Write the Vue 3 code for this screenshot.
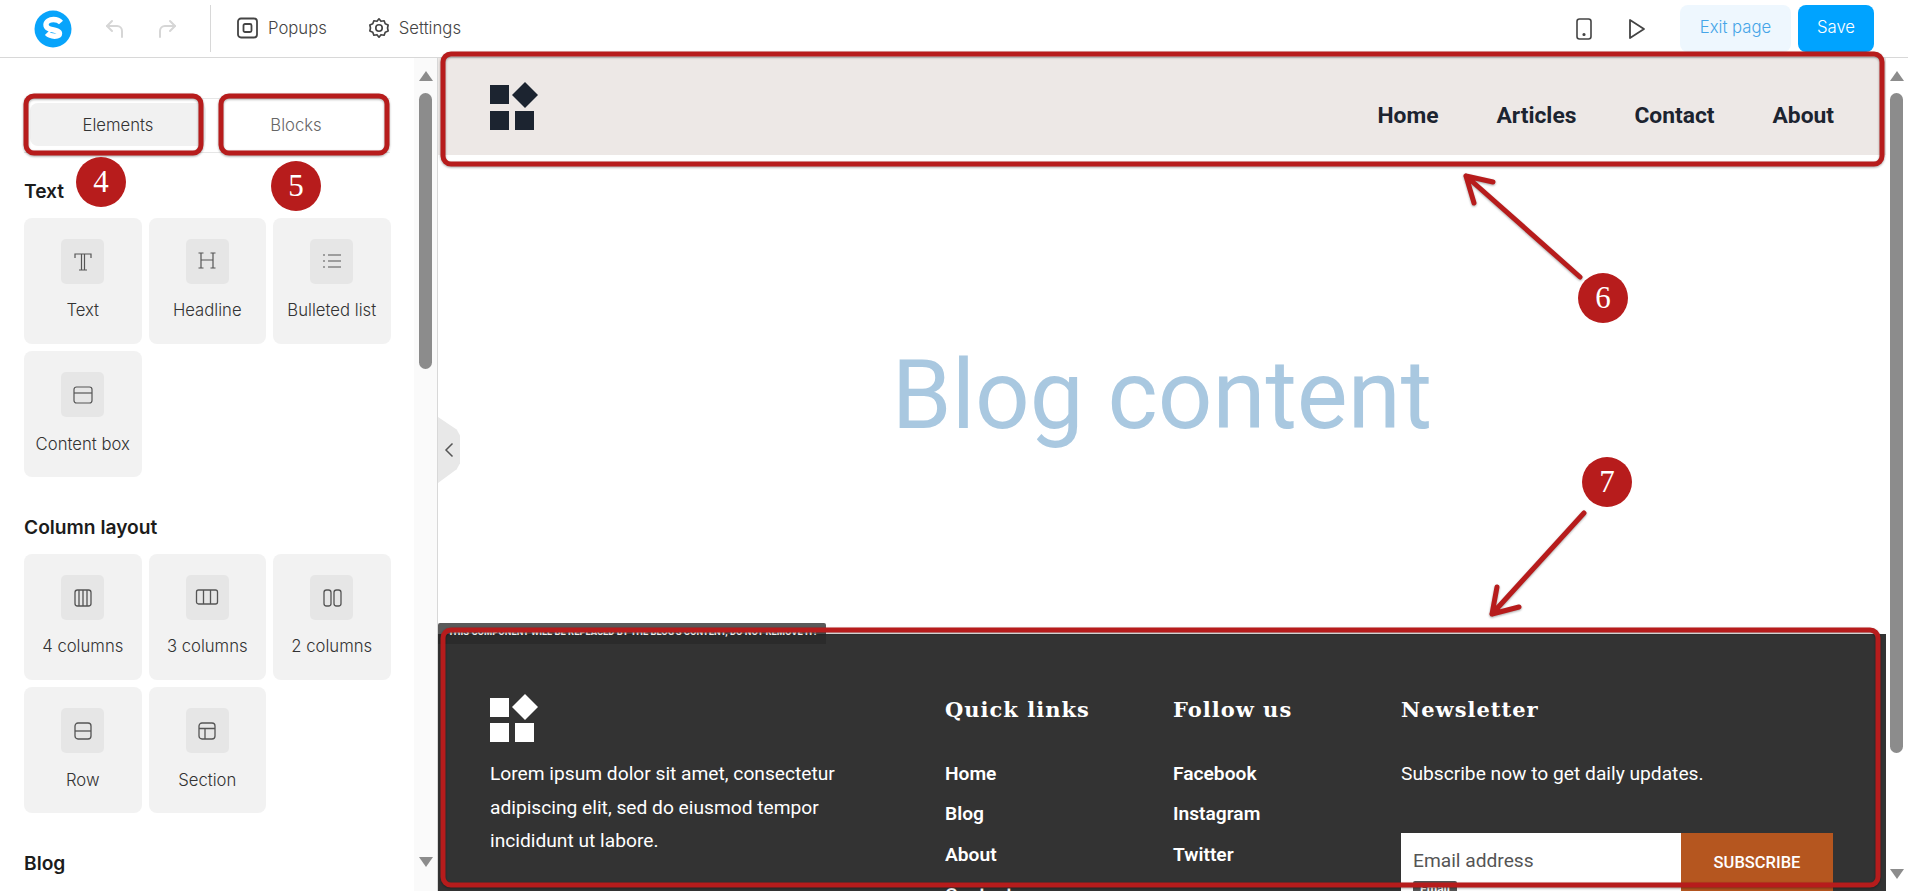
<script setup>
const textTiles = [
  { label: 'Text', icon: 'text' },
  { label: 'Headline', icon: 'headline' },
  { label: 'Bulleted list', icon: 'list' },
  { label: 'Content box', icon: 'box' },
]

const columnTiles = [
  { label: '4 columns', icon: 'col4' },
  { label: '3 columns', icon: 'col3' },
  { label: '2 columns', icon: 'col2' },
  { label: 'Row', icon: 'row' },
  { label: 'Section', icon: 'section' },
]

const navLinks = ['Home', 'Articles', 'Contact', 'About']
const quickLinks = ['Home', 'Blog', 'About', 'Contact']
const followLinks = ['Facebook', 'Instagram', 'Twitter']

const badges = [
  { n: 4, x: 101, y: 182 },
  { n: 5, x: 296, y: 186 },
  { n: 6, x: 1603, y: 298 },
  { n: 7, x: 1607, y: 482 },
]
</script>

<template>
  <div class="page">
    <header class="topbar">
      <div class="brand">
        <svg width="38" height="38" viewBox="0 0 38 38">
          <circle cx="19" cy="19" r="18.5" fill="#08a4fb" />
          <path d="M27 12.500c-2-2.200-4.700-3-7.500-3-4 0-7.500 2-7.500 5.200 0 6.800 13.500 3.800 13.500 8.900 0 1.700-2 2.600-5 2.600-3 0-5.700-1-7.700-3" fill="none" stroke="#fff" stroke-width="5.400" />
        </svg>
      </div>
      <div class="history">
        <svg width="24" height="24" viewBox="0 0 24 24" fill="none" stroke="#d6d6d6" stroke-width="2" stroke-linecap="round" stroke-linejoin="round">
          <path d="M9 4 4 9l5 5" /><path d="M4 9h10a5 5 0 0 1 5 5v6" />
        </svg>
        <svg width="24" height="24" viewBox="0 0 24 24" fill="none" stroke="#d6d6d6" stroke-width="2" stroke-linecap="round" stroke-linejoin="round">
          <path d="m15 4 5 5-5 5" /><path d="M20 9H10a5 5 0 0 0-5 5v6" />
        </svg>
      </div>
      <div class="divider"></div>
      <a class="top-link popups">
        <svg width="22" height="22" viewBox="0 0 22 22" fill="none" stroke="#444" stroke-width="1.800">
          <rect x="1" y="1.500" width="19" height="19" rx="3" /><rect x="6.500" y="7" width="8" height="8" rx="1.500" />
        </svg>
        Popups
      </a>
      <a class="top-link settings">
        <svg width="22" height="22" viewBox="0 0 24 24" fill="none" stroke="#444" stroke-width="1.800" stroke-linejoin="round">
          <path d="M12 2l2.200 2.700 3.400-.6 1.200 3.300 3.200 1.300-.7 3.300.7 3.300-3.200 1.300-1.200 3.300-3.400-.6L12 22l-2.200-2.700-3.400.6-1.200-3.300L2 15.300l.7-3.300L2 8.700l3.200-1.300 1.200-3.300 3.400.6z" />
          <circle cx="12" cy="12" r="3.500" />
        </svg>
        Settings
      </a>
      <div class="top-actions">
        <svg class="phone" width="16" height="22" viewBox="0 0 16 22" fill="none" stroke="#444" stroke-width="1.600">
          <rect x="1" y="1" width="14" height="20" rx="2.500" /><circle cx="8" cy="16.500" r="0.800" fill="#444" />
        </svg>
        <svg class="play" width="18" height="22" viewBox="0 0 18 22" fill="none" stroke="#444" stroke-width="1.800" stroke-linejoin="round">
          <path d="M2 2v18l14-9z" />
        </svg>
        <button class="exit-btn">Exit page</button>
        <button class="save-btn">Save</button>
      </div>
    </header>

    <div class="workspace">
      <aside class="sidebar">
        <div class="side-scroll">
          <div class="tabs">
            <div class="tab active">Elements</div>
            <div class="tab">Blocks</div>
          </div>

          <h3 class="group-title">Text</h3>
          <div class="tiles">
            <div v-for="tile in textTiles" :key="tile.label" class="tile">
              <span class="tile-icon">
                <svg width="24" height="24" viewBox="0 0 24 24" fill="none" stroke="#555" stroke-width="1.200">
                  <template v-if="tile.icon === 'text'">
                    <path d="M4 8V4h16v4M10.500 4v16M13.500 4v16M8 20h8" />
                  </template>
                  <template v-else-if="tile.icon === 'headline'">
                    <path d="M6 3v15M18 3v15M6 10h12M3.500 3h5M15.500 3h5M3.500 18h5M15.500 18h5" />
                  </template>
                  <template v-else-if="tile.icon === 'list'">
                    <path d="M8 5h13M8 11h13M8 17h13M3 5h2M3 11h2M3 17h2" />
                  </template>
                  <template v-else>
                    <rect x="3" y="4" width="18" height="16" rx="2.500" /><path d="M3 10h18" />
                  </template>
                </svg>
              </span>
              <span class="tile-label">{{ tile.label }}</span>
            </div>
          </div>

          <h3 class="group-title second">Column layout</h3>
          <div class="tiles">
            <div v-for="tile in columnTiles" :key="tile.label" class="tile">
              <span class="tile-icon">
                <svg width="24" height="24" viewBox="0 0 24 24" fill="none" stroke="#555" stroke-width="1.300">
                  <template v-if="tile.icon === 'col4'">
                    <rect x="4" y="4" width="16" height="16" rx="2.500" /><path d="M8 4v16M12 4v16M16 4v16" />
                  </template>
                  <template v-else-if="tile.icon === 'col3'">
                    <rect x="1.500" y="4" width="21" height="14" rx="2" /><path d="M8.500 4v14M15.500 4v14" />
                  </template>
                  <template v-else-if="tile.icon === 'col2'">
                    <rect x="4" y="4" width="7" height="16" rx="2.500" /><rect x="14" y="4" width="7" height="16" rx="2.500" />
                  </template>
                  <template v-else-if="tile.icon === 'row'">
                    <rect x="4" y="4" width="16" height="16" rx="3" /><path d="M4 12h16" />
                  </template>
                  <template v-else>
                    <rect x="4" y="4" width="16" height="16" rx="3" /><path d="M4 9.500h16M10 9.500V20" />
                  </template>
                </svg>
              </span>
              <span class="tile-label">{{ tile.label }}</span>
            </div>
          </div>

          <h3 class="group-title third">Blog</h3>
        </div>
        <div class="scrollbar">
          <span class="arrow up"></span>
          <span class="thumb side-thumb"></span>
          <span class="arrow down"></span>
        </div>
      </aside>

      <main class="preview">
        <div class="collapse-handle">
          <svg width="10" height="16" viewBox="0 0 10 16" fill="none" stroke="#555" stroke-width="1.500">
            <path d="M8.500 1.500 2 8l6.500 6.500" />
          </svg>
        </div>
        <div class="canvas">
          <nav class="site-nav">
            <svg class="site-logo" width="48" height="52" viewBox="0 0 48 52" fill="#1c2430">
              <rect x="0" y="6" width="19" height="19" />
              <rect x="0" y="32" width="19" height="19" />
              <rect x="25" y="32" width="19" height="19" />
              <path d="M35 3l13 13-13 13-13-13z" />
            </svg>
            <div class="nav-links">
              <a v-for="link in navLinks" :key="link">{{ link }}</a>
            </div>
          </nav>

          <section class="blog-content">Blog content</section>

          <footer class="site-footer">
            <div class="replace-tag">THIS COMPONENT WILL BE REPLACED BY THE BLOG'S CONTENT, DO NOT REMOVE IT!</div>
            <div class="foot-about">
              <svg class="foot-logo" width="48" height="48" viewBox="0 0 48 48" fill="#fff">
                <rect x="0" y="4" width="19" height="19" />
                <rect x="0" y="29" width="19" height="19" />
                <rect x="25" y="29" width="19" height="19" />
                <path d="M35 0l13 13-13 13-13-13z" />
              </svg>
              <p>Lorem ipsum dolor sit amet, consectetur adipiscing elit, sed do eiusmod tempor incididunt ut labore.</p>
            </div>
            <div class="foot-col quick">
              <h4>Quick links</h4>
              <a v-for="link in quickLinks" :key="link">{{ link }}</a>
            </div>
            <div class="foot-col follow">
              <h4>Follow us</h4>
              <a v-for="link in followLinks" :key="link">{{ link }}</a>
            </div>
            <div class="foot-col news">
              <h4>Newsletter</h4>
              <p>Subscribe now to get daily updates.</p>
              <div class="subscribe">
                <div class="email">
                  Email address
                  <span class="email-tag">Email</span>
                </div>
                <button>SUBSCRIBE</button>
              </div>
            </div>
          </footer>
        </div>
        <div class="scrollbar page-scroll">
          <span class="arrow up"></span>
          <span class="thumb main-thumb"></span>
          <span class="arrow down"></span>
        </div>
      </main>
    </div>

    <svg class="annotations" width="1908" height="891" viewBox="0 0 1908 891" fill="none" stroke="#b71c1c" stroke-width="5" stroke-linecap="round" stroke-linejoin="round">
      <g class="marks">
        <rect x="26" y="96" width="175" height="57" rx="8" />
        <rect x="221" y="96" width="166" height="57" rx="8" />
        <rect x="443" y="54" width="1439" height="110" rx="8" />
        <rect x="443" y="630" width="1435" height="255" rx="8" />
        <path d="M1580 277 1466 176M1466 176l27 6M1466 176l8 27" />
        <path d="M1584 513 1492 614M1492 614l27-7M1492 614l5-27" />
      </g>
    </svg>
    <span v-for="b in badges" :key="b.n" class="badge" :style="{ left: b.x - 25 + 'px', top: b.y - 25 + 'px' }">{{ b.n }}</span>
  </div>
</template>

<style>
html, body {
  margin: 0;
  overflow: hidden;
  background: #fff;
}
</style>

<style scoped>
.page {
  position: relative;
  width: 1908px;
  height: 891px;
  overflow: hidden;
  display: flex;
  flex-direction: column;
  font-family: Inter, "Liberation Sans", sans-serif;
  color: #222;
  background: #fff;
}

.topbar {
  height: 57px;
  flex: none;
  display: flex;
  align-items: center;
  border-bottom: 1px solid #d8d8d8;
}

.brand {
  display: flex;
  margin-left: 34px;
}

.history {
  display: flex;
  gap: 28px;
  margin-left: 31px;
}

.divider {
  width: 1px;
  height: 47px;
  background: #d8d8d8;
  margin-left: 31px;
}

.top-link {
  display: flex;
  align-items: center;
  gap: 9px;
  font-size: 16.700px;
  font-weight: 350;
  line-height: 20px;
  color: #444;
  margin-bottom: 1px;
}

.popups {
  margin-left: 26px;
}

.settings {
  margin-left: 41px;
}

.top-actions {
  margin-left: auto;
  display: flex;
  align-items: center;
  padding-right: 34px;
}

.play {
  margin-left: 36px;
  margin-right: 34px;
}

.exit-btn,
.save-btn {
  height: 47px;
  border: 0;
  border-radius: 8px;
  padding: 0 0 3px;
  font: 350 16.700px Inter, sans-serif;
}

.exit-btn {
  width: 111px;
  background: #eef7fe;
  color: #45a5e8;
}

.save-btn {
  width: 76px;
  margin-left: 7px;
  background: #00a3ff;
  color: #fff;
}

.workspace {
  flex: 1;
  min-height: 0;
  display: flex;
}

.sidebar {
  width: 437px;
  flex: none;
  display: flex;
  border-right: 1px solid #d8d8d8;
  box-sizing: content-box;
}

.side-scroll {
  width: 414px;
  flex: none;
  overflow: hidden;
  padding-left: 24px;
  box-sizing: border-box;
}

.tabs {
  display: flex;
  width: 366px;
  height: 55px;
  margin-top: 40px;
  box-sizing: border-box;
  border-top: 1px solid #e6e6e6;
  border-bottom: 1px solid #e6e6e6;
  padding: 4px 6px 6px;
}

.tab {
  flex: 1;
  display: flex;
  align-items: center;
  justify-content: center;
  border-radius: 8px;
  font-size: 16.700px;
  font-weight: 350;
  color: #666;
  padding-left: 2px;
}

.tab.active {
  background: #f1f1f1;
  color: #333;
  flex: 0 0 176px;
  padding-left: 0;
}

.group-title {
  margin: 25px 0 0;
  height: 26px;
  line-height: 26px;
  font-size: 19.200px;
  font-weight: 600;
  color: #1c1c1c;
}

.group-title.second,
.group-title.third {
  margin-top: 37px;
}

.tiles {
  display: grid;
  grid-template-columns: repeat(3, 117.500px);
  grid-auto-rows: 126px;
  gap: 7px;
  margin-top: 14px;
}

.tile {
  background: #f2f2f2;
  border-radius: 8px;
  display: flex;
  flex-direction: column;
  align-items: center;
  padding-top: 21px;
  box-sizing: border-box;
}

.tile:nth-child(n + 4) .tile-label {
  margin-top: 17px;
}

.tile-icon {
  width: 43px;
  height: 45px;
  border-radius: 5px;
  background: #e6e6e6;
  display: flex;
  align-items: center;
  justify-content: center;
}

.tile-label {
  margin-top: 16px;
  font-size: 16.700px;
  font-weight: 350;
  line-height: 20px;
  color: #333;
}

.scrollbar {
  width: 23px;
  flex: none;
  background: #fafafa;
  position: relative;
}

.page-scroll {
  width: 22px;
  background: #fff;
}

.arrow {
  position: absolute;
  left: 50%;
  margin-left: -7px;
  border-left: 7px solid transparent;
  border-right: 7px solid transparent;
}

.arrow.up {
  top: 13px;
  border-bottom: 10px solid #8c8c8c;
}

.arrow.down {
  bottom: 24px;
  border-top: 10px solid #8c8c8c;
}

.page-scroll .arrow.down {
  bottom: 12px;
}

.thumb {
  position: absolute;
  left: 5px;
  width: 13px;
  background: #8c8c8c;
  border-radius: 7px;
}

.side-thumb {
  top: 35px;
  height: 276px;
}

.main-thumb {
  left: 4px;
  top: 35px;
  height: 660px;
}

.preview {
  flex: 1;
  min-width: 0;
  display: flex;
  position: relative;
}

.canvas {
  flex: 1;
  min-width: 0;
  display: flex;
  flex-direction: column;
  overflow: hidden;
}

.collapse-handle {
  position: absolute;
  left: 0;
  top: 359px;
  width: 22px;
  height: 66px;
  background: #e8e8e8;
  clip-path: polygon(0 0, 85% 19%, 100% 28%, 100% 70%, 85% 79%, 0 100%);
  display: flex;
  align-items: center;
  justify-content: center;
  z-index: 2;
}

.site-nav {
  height: 97px;
  flex: none;
  background: #ede8e6;
  display: flex;
  align-items: center;
  padding: 0 52px;
}

.site-logo {
  margin-top: -4px;
  overflow: visible;
}

.nav-links {
  margin-left: auto;
  display: flex;
  gap: 58px;
  padding-top: 18px;
  font-family: Roboto, sans-serif;
  font-size: 22.800px;
  font-weight: 700;
  color: #1c2430;
}

.blog-content {
  flex: 1;
  display: flex;
  align-items: center;
  justify-content: center;
  font-family: Roboto, sans-serif;
  font-size: 96px;
  color: #a9c8e0;
}

.site-footer {
  height: 257px;
  flex: none;
  position: relative;
  background: #333;
  color: #fff;
  display: flex;
  box-sizing: border-box;
  padding: 60px 0 0 52px;
  font-family: Roboto, sans-serif;
  font-size: 19.200px;
}

.replace-tag {
  position: absolute;
  left: 0;
  top: -11px;
  width: 388px;
  height: 21px;
  box-sizing: border-box;
  padding-left: 10px;
  background: linear-gradient(#5a5a5a 11px, #2b2b2b 11px);
  border-radius: 2px 2px 0 0;
  font-size: 9.400px;
  font-weight: 800;
  line-height: 18px;
  white-space: nowrap;
  overflow: hidden;
}

.foot-about {
  width: 455px;
  flex: none;
}

.foot-logo {
  display: block;
  overflow: visible;
}

.foot-about p {
  margin: 15px 0 0;
  width: 360px;
  font-weight: 400;
  line-height: 33.500px;
}

.foot-col {
  display: flex;
  flex-direction: column;
  flex: none;
  margin-top: 1px;
}

.foot-col h4 {
  flex: none;
  margin: 0 0 37px;
  height: 30px;
  font-family: "DejaVu Serif", serif;
  font-size: 21px;
  line-height: 30px;
  font-weight: 700;
  letter-spacing: 1px;
}

.foot-col a {
  flex: none;
  height: 40.300px;
  line-height: 24px;
  font-weight: 600;
}

.quick,
.follow {
  width: 228px;
}

.news {
  width: 433px;
}

.news p {
  flex: none;
  margin: 0;
  line-height: 24px;
}

.subscribe {
  display: flex;
  flex: none;
  margin-top: 47px;
  height: 70px;
}

.email {
  width: 280px;
  position: relative;
  background: #fff;
  color: #555;
  padding: 16px 12px;
  line-height: 24px;
  box-sizing: border-box;
}

.email-tag {
  position: absolute;
  left: 12px;
  top: 48px;
  width: 44px;
  height: 20px;
  background: #555;
  color: #fff;
  font-size: 12px;
  font-weight: 700;
  line-height: 16px;
  text-align: center;
  border-radius: 2px 2px 0 0;
}

.subscribe button {
  width: 152px;
  border: 0;
  padding: 0 0 12px;
  background: #b5561f;
  color: #fff;
  font: 500 16.500px Roboto, sans-serif;
}

.annotations {
  position: absolute;
  left: 0;
  top: 0;
  pointer-events: none;
}

.marks {
  filter: drop-shadow(0 1px 1px rgba(0, 0, 0, 0.35));
}

.badge {
  position: absolute;
  width: 50px;
  height: 50px;
  border-radius: 50%;
  background: #b71c1c;
  color: #fff;
  font-family: "Liberation Serif", serif;
  font-size: 31px;
  line-height: 50px;
  text-align: center;
}
</style>
